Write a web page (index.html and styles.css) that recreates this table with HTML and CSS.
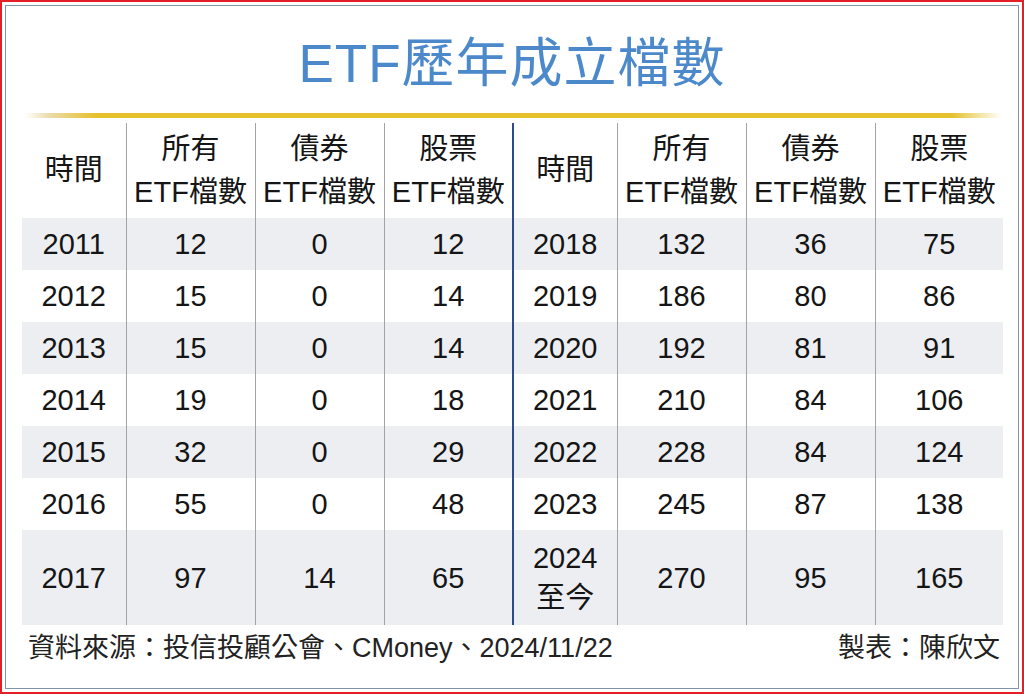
FILE: index.html
```html
<!DOCTYPE html>
<html lang="zh-Hant">
<head>
<meta charset="utf-8">
<title>ETF歷年成立檔數</title>
<link rel="stylesheet" href="styles.css">
</head>
<body>
<div class="frame">
  <h1 class="title">ETF歷年成立檔數</h1>
  <div class="rule"></div>
  <table class="etf">
    <colgroup>
      <col class="c-year"><col class="c-num"><col class="c-num"><col class="c-num">
      <col class="c-year"><col class="c-num"><col class="c-num"><col class="c-last">
    </colgroup>
    <thead>
      <tr>
        <th>時間</th>
        <th class="sep">所有<br>ETF檔數</th>
        <th class="sep">債券<br>ETF檔數</th>
        <th class="sep">股票<br>ETF檔數</th>
        <th class="mid">時間</th>
        <th class="sep">所有<br>ETF檔數</th>
        <th class="sep">債券<br>ETF檔數</th>
        <th class="sep">股票<br>ETF檔數</th>
      </tr>
    </thead>
    <tbody>
      <tr class="shade"><td>2011</td><td class="sep">12</td><td class="sep">0</td><td class="sep">12</td><td class="mid">2018</td><td class="sep">132</td><td class="sep">36</td><td class="sep">75</td></tr>
      <tr><td>2012</td><td class="sep">15</td><td class="sep">0</td><td class="sep">14</td><td class="mid">2019</td><td class="sep">186</td><td class="sep">80</td><td class="sep">86</td></tr>
      <tr class="shade"><td>2013</td><td class="sep">15</td><td class="sep">0</td><td class="sep">14</td><td class="mid">2020</td><td class="sep">192</td><td class="sep">81</td><td class="sep">91</td></tr>
      <tr><td>2014</td><td class="sep">19</td><td class="sep">0</td><td class="sep">18</td><td class="mid">2021</td><td class="sep">210</td><td class="sep">84</td><td class="sep">106</td></tr>
      <tr class="shade"><td>2015</td><td class="sep">32</td><td class="sep">0</td><td class="sep">29</td><td class="mid">2022</td><td class="sep">228</td><td class="sep">84</td><td class="sep">124</td></tr>
      <tr><td>2016</td><td class="sep">55</td><td class="sep">0</td><td class="sep">48</td><td class="mid">2023</td><td class="sep">245</td><td class="sep">87</td><td class="sep">138</td></tr>
      <tr class="shade tall"><td>2017</td><td class="sep">97</td><td class="sep">14</td><td class="sep">65</td><td class="mid two">2024<br>至今</td><td class="sep">270</td><td class="sep">95</td><td class="sep">165</td></tr>
    </tbody>
  </table>
  <div class="footer">
    <span>資料來源：投信投顧公會、CMoney、2024/11/22</span>
    <span>製表：陳欣文</span>
  </div>
</div>
</body>
</html>
```

FILE: styles.css
```css
html, body {
  margin: 0;
  padding: 0;
}
body {
  width: 1024px;
  height: 694px;
  box-sizing: border-box;
  border: 2px solid #e41e26;
  padding: 3px;
  background: #ffffff;
  font-family: "Liberation Sans", "Noto Sans CJK TC", sans-serif;
  color: #151515;
  overflow: hidden;
}
.frame {
  height: 100%;
  box-sizing: border-box;
  border: 1px solid #7f95ae;
  display: flex;
  flex-direction: column;
}
.title {
  margin: 28px 0 0 0;
  font-size: 53px;
  line-height: 60px;
  font-weight: normal;
  letter-spacing: 1px;
  color: #4b89cb;
  text-align: center;
}
.rule {
  height: 5px;
  margin: 19px 16px 0 19px;
  background: linear-gradient(to right,
    rgba(230, 193, 46, 0) 0,
    rgba(222, 196, 110, 0.6) 25px,
    #e6c12e 70px,
    #e6c12e calc(100% - 50px),
    rgba(230, 193, 46, 0) 100%);
}
.etf {
  margin: 5px 13px 0 16px;
  width: 981px;
  table-layout: fixed;
  border-collapse: collapse;
  font-size: 29px;
}
.c-year { width: 104px; }
.c-num { width: 129px; }
.c-last { width: 128px; }
.etf th {
  height: 95px;
  padding: 0;
  font-weight: normal;
  line-height: 43px;
  text-align: center;
  vertical-align: middle;
}
.etf td {
  height: 52px;
  padding: 0;
  line-height: 40px;
  text-align: center;
  vertical-align: middle;
}
.etf .sep {
  border-left: 1px solid #a3a3a3;
}
.etf .mid {
  border-left: 2px solid #2c4b8e;
}
.etf tr.shade td {
  background: #eceef2;
}
.etf tr.tall td {
  height: 95px;
}
.footer {
  margin-top: 7px;
  padding: 0 18px 0 22px;
  display: flex;
  justify-content: space-between;
  font-size: 27px;
  line-height: 32px;
  color: #222222;
}
```
